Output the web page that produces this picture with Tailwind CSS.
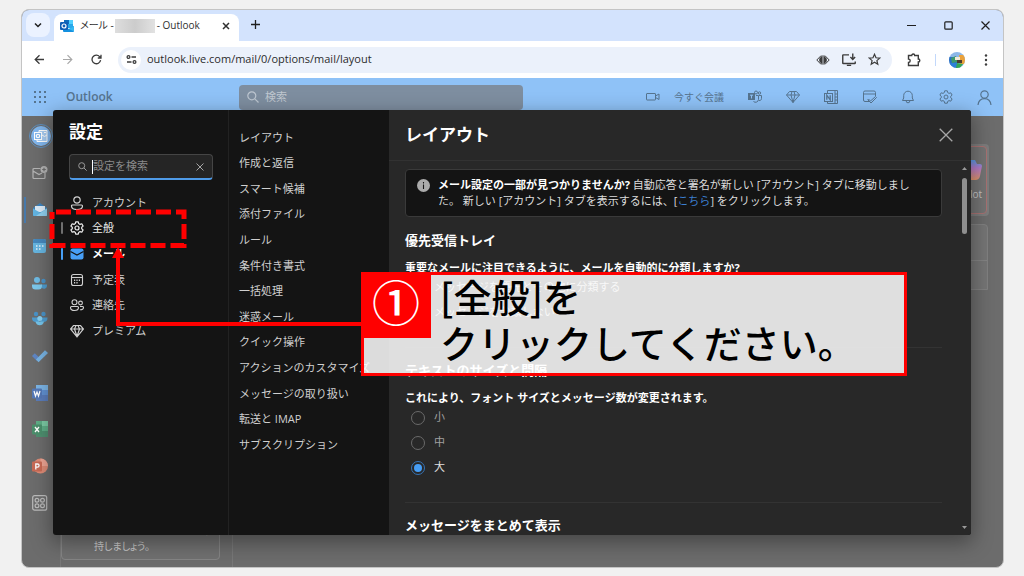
<!DOCTYPE html>
<html lang="ja">
<head>
<meta charset="utf-8">
<meta name="viewport" content="width=device-width, initial-scale=1">
<title>Outlook 設定</title>
<script src="https://cdn.jsdelivr.net/npm/@tailwindcss/browser@4"></script>
</head>
<body class="relative flex min-h-screen flex-col bg-[#f1f1f1] pt-[9px] pr-5 pb-2 pl-[21px] font-['Open_Sans','Noto_Sans_CJK_JP',sans-serif] text-[11px]">

<div class="relative flex flex-1 flex-col overflow-hidden rounded-lg border border-[#c4c4c4] bg-[#6c6c6c]">

  <!-- Tab strip -->
  <div class="flex h-[31px] items-end bg-[#d3e3fd] pl-1 text-[#1f1f1f]">
    <button aria-label="タブを検索" class="mb-1 flex size-6 items-center justify-center rounded-lg bg-[#ebf2ff]">
      <svg class="size-2" viewBox="0 0 8 8" fill="none" stroke="currentColor" stroke-width="1.5"><path d="M1 2.5 4 5.5 7 2.5"/></svg>
    </button>
    <div class="relative ml-1 flex h-[27px] w-[185px] items-center rounded-t-lg bg-white pb-1 pl-1.5 text-[#303030]">
      <svg class="size-[14px]" viewBox="0 0 14 14"><rect x="4" y="1" width="9" height="8" rx="1" fill="#28a8ea"/><path d="M4 1h5v4H4z" fill="#0f6cbd"/><path d="M9 1h3a1 1 0 0 1 1 1v3H9z" fill="#50d0ff"/><path d="M3 7l6 3 5-3v5a1 1 0 0 1-1 1H4a1 1 0 0 1-1-1z" fill="#1490df"/><path d="M9 10l5-3v5.500z" fill="#35b8f1"/><rect y="3" width="8" height="8" rx="1" fill="#0f5fb5"/><circle cx="4" cy="7" r="2" fill="none" stroke="#fff" stroke-width="1.200"/></svg>
      <span class="ml-1.5 flex items-center gap-px text-[10px] whitespace-nowrap"><span class="[font-feature-settings:'palt']">メール -</span><span class="h-3.5 w-10 bg-gradient-to-r from-[#dedede] via-[#cccccc] to-[#e2e2e2]"></span><span class="pl-px">- Outlook</span></span>
      <button aria-label="タブを閉じる" class="mr-[9px] ml-auto"><svg class="size-2" viewBox="0 0 8 8" stroke="currentColor" stroke-width="1.500"><path d="M1 1l6 6M7 1 1 7"/></svg></button>
    </div>
    <button aria-label="新しいタブ" class="mb-3 ml-3"><svg class="size-[9px]" viewBox="0 0 9 9" stroke="currentColor" stroke-width="1.300"><path d="M4.500 0v9M0 4.500h9"/></svg></button>
    <div class="mr-[13px] mb-[11px] ml-auto flex items-center gap-7">
      <button aria-label="最小化"><svg class="size-[9px]" viewBox="0 0 9 9" stroke="currentColor"><path d="M0 4.500h9"/></svg></button>
      <button aria-label="最大化"><svg class="size-[9px]" viewBox="0 0 9 9" fill="none" stroke="currentColor" stroke-width="1.200"><rect x=".8" y=".8" width="7.400" height="7.400" rx="1"/></svg></button>
      <button aria-label="閉じる"><svg class="size-[9px]" viewBox="0 0 9 9" stroke="currentColor" stroke-width="1.200"><path d="M.5.500l8 8M8.500.500l-8 8"/></svg></button>
    </div>
  </div>

  <!-- Address bar -->
  <div class="flex h-[37px] items-center bg-white pr-3 pl-3 text-[#3c3c3c]">
    <button aria-label="戻る"><svg class="size-[11px]" viewBox="0 0 11 11" fill="none" stroke="currentColor" stroke-width="1.300"><path d="M10 5.500H1.500M5.500 1.200 1.200 5.500l4.300 4.300"/></svg></button>
    <button aria-label="進む" class="ml-[17px] text-[#a8a8a8]"><svg class="size-[11px]" viewBox="0 0 11 11" fill="none" stroke="currentColor" stroke-width="1.200"><path d="M1 5.500h8.500M5.500 1.200l4.300 4.300-4.300 4.300"/></svg></button>
    <button aria-label="再読み込み" class="ml-[18px]"><svg class="size-[11px]" viewBox="0 0 11 11" fill="none" stroke="currentColor" stroke-width="1.300"><path d="M9.600 6.200a4.300 4.300 0 1 1-1-3.600L10 4M10 .8V4H6.800"/></svg></button>
    <div class="ml-4 flex h-[26px] flex-1 items-center rounded-full bg-[#ebf1fb] pr-[11px] pl-[3px]">
      <button aria-label="サイト情報" class="flex size-5 items-center justify-center rounded-full bg-white"><svg class="size-[11px]" viewBox="0 0 11 11" fill="none" stroke="currentColor" stroke-width="1.300"><circle cx="2.500" cy="3" r="1.400"/><path d="M5.500 3H10M1 8h4.500"/><circle cx="8.500" cy="8" r="1.400"/></svg></button>
      <input aria-label="アドレス" type="text" value="outlook.live.com/mail/0/options/mail/layout" class="ml-1.5 min-w-0 flex-1 bg-transparent text-[11px] text-[#2c2c2c] outline-none">
      <div class="flex items-center gap-3">
        <button aria-label="レンズ"><svg class="size-[14px]" viewBox="0 0 14 14" fill="none" stroke="currentColor"><path d="M5.200 2.500.8 7l4.400 4.500M8.800 2.500 13.200 7l-4.400 4.500"/><path d="M6.600 2v10L3.200 8.200V5.800zM7.400 2v10l3.400-3.800V5.800z" fill="currentColor" stroke="none"/></svg></button>
        <button aria-label="インストール"><svg class="size-[14px]" viewBox="0 0 13 13" fill="none" stroke="currentColor" stroke-width="1.300"><path d="M6.500 1.700H1.200a.5.500 0 0 0-.5.500v7.100a.5.500 0 0 0 .5.500h10.600a.5.500 0 0 0 .5-.5V7.800M4.500 11.500h4M10 .5v5M7.800 3.800 10 6l2.200-2.200"/></svg></button>
        <button aria-label="ブックマーク"><svg class="size-[13px]" viewBox="0 0 13 13" fill="none" stroke="currentColor" stroke-width="1.200"><path d="M6.500 1.300l1.500 3.500 3.800.3-2.900 2.500.9 3.700-3.300-2-3.300 2 .9-3.700L1.200 5.100 5 4.800z"/></svg></button>
      </div>
    </div>
    <button aria-label="拡張機能" class="ml-[15px]"><svg class="size-[14px]" viewBox="0 0 14 14" fill="none" stroke="currentColor" stroke-width="1.400"><path d="M1.500 2.500h3.200a1.500 1.500 0 0 1 3 0h3.600V6a1.500 1.500 0 0 1 0 3v3.500H1.500V9.500a1.700 1.700 0 0 0 0-3.400z"/></svg></button>
    <span class="ml-[14px] h-3 w-px bg-[#c2d8fb]"></span>
    <button aria-label="プロフィール" class="ml-[13px]"><svg class="size-4" viewBox="0 0 16 16"><clipPath id="av"><circle cx="8" cy="8" r="8"/></clipPath><g clip-path="url(#av)"><path fill="#8db7e8" d="M0 0h16v16H0z"/><path fill="#2a6fc4" d="M0 5h8v8H0z"/><path fill="#3f9a6c" d="M2 6l5-2 2 6-6 1z"/><path fill="#e9a13b" d="M10 3h6v9h-5z"/><path fill="#f2ead8" d="M6 5h5v3H6z"/><path fill="#4a3a30" d="M8 8h5v3H8z"/><path fill="#2c7fd8" d="M0 11h8v5H0z"/><path fill="#33a853" d="M8 11l6 1-3 4H7z"/></g></svg></button>
    <button aria-label="メニュー" class="ml-4"><svg class="h-3 w-[10px]" viewBox="0 0 10 12" fill="currentColor"><circle cx="5" cy="1.500" r="1.200"/><circle cx="5" cy="6" r="1.200"/><circle cx="5" cy="10.500" r="1.200"/></svg></button>
  </div>

  <!-- Outlook header -->
  <header class="flex h-[38px] items-center bg-[#8fc2f7] pr-[11px] pl-3 text-[#56748f]">
    <button aria-label="アプリ起動ツール"><svg class="size-3" viewBox="0 0 12 12" fill="currentColor"><path d="M0 0h2v2H0zM5 0h2v2H5zM10 0h2v2h-2zM0 5h2v2H0zM5 5h2v2H5zM10 5h2v2h-2zM0 10h2v2H0zM5 10h2v2H5zM10 10h2v2h-2z"/></svg></button>
    <span class="ml-5 w-[173px] text-[12px] font-semibold">Outlook</span>
    <label class="flex h-[25px] w-[284px] items-center gap-1.5 rounded-sm bg-[#7e8ea0] pl-2 text-[#bdc6d0]">
      <svg class="size-3" viewBox="0 0 12 12" fill="none" stroke="currentColor" stroke-width="1.200"><circle cx="4.800" cy="4.800" r="4"/><path d="M7.800 7.800 11.500 11.500"/></svg>
      <input aria-label="検索" type="search" placeholder="検索" class="min-w-0 flex-1 bg-transparent text-[11px] outline-none placeholder:text-[#c0c8d0]">
    </label>
    <nav class="ml-auto flex items-center gap-6">
      <button class="flex items-center gap-3.5 text-[10px]"><svg class="size-[14px]" viewBox="0 0 14 14" fill="none" stroke="currentColor"><rect x=".5" y="3.500" width="9" height="6.500" rx=".5"/><path d="M9.500 6 13 4v5.500L9.500 7.500"/></svg>今すぐ会議</button>
      <button aria-label="Teams"><svg class="size-[14px]" viewBox="0 0 14 14" fill="none" stroke="currentColor"><rect x=".5" y="3.500" width="6" height="6" fill="currentColor"/><path d="M2 5.200h3M3.500 5.200V8.500" stroke="#8fc2f7"/><circle cx="8" cy="2.500" r="1.500"/><circle cx="11.500" cy="3" r="1.200"/><path d="M8 5.500h2.500v4a3 3 0 0 1-5 2M11 5.500h2.500v3a2 2 0 0 1-2.500 2"/></svg></button>
      <button aria-label="プレミアム"><svg class="size-[14px]" viewBox="0 0 14 14" fill="none" stroke="currentColor"><path d="M3.500 1.500h7l3 3.500L7 12.500.5 5zM.5 5h13M5 5l2 7.500L9 5M5 5l1-3.500M9 5 8 1.500"/></svg></button>
      <button aria-label="OneNote"><svg class="size-[15px]" viewBox="0 0 15 15" fill="none" stroke="currentColor"><path d="M3.500 3V.5h10v13h-10V12M11 .5v13M11 4h2.500M11 7h2.500M11 10h2.500"/><rect x=".5" y="3.500" width="8" height="8"/><path d="M2.800 9.800V5.200l3.400 4.600V5.200" stroke-width="1.300"/></svg></button>
      <button aria-label="自分の一日"><svg class="size-[14px]" viewBox="0 0 14 14" fill="none" stroke="currentColor"><path d="M6 11.500H2A1.500 1.500 0 0 1 .5 10V2.500A1.500 1.500 0 0 1 2 1h9a1.500 1.500 0 0 1 1.500 1.500V6M.5 4h12"/><path d="M5.500 9l2 2L12.500 6.500l1 1-5.500 5.500-3.200-3.200z"/></svg></button>
      <button aria-label="通知"><svg class="size-[14px]" viewBox="0 0 14 14" fill="none" stroke="currentColor"><path d="M1.500 10.500l1.200-2.500V5.500a4.300 4.300 0 0 1 8.600 0V8l1.200 2.500zM5.200 11a1.800 1.800 0 0 0 3.600 0"/></svg></button>
      <button aria-label="設定"><svg class="size-[14px]" viewBox="0 0 14 14" fill="none" stroke="currentColor" stroke-linejoin="round"><circle cx="7" cy="7" r="2"/><path d="M5.700.8h2.600l.4 1.800 1.300.8 1.800-.6 1.300 2.300L11.700 6.300v1.400l1.400 1.200-1.300 2.300-1.800-.6-1.300.8-.4 1.800H5.700l-.4-1.800-1.300-.8-1.800.6L.9 8.900l1.400-1.200V6.300L.9 5.100l1.300-2.300 1.800.6 1.300-.8z"/></svg></button>
      <button aria-label="アカウント"><svg class="size-[15px]" viewBox="0 0 15 15" fill="none" stroke="currentColor" stroke-width="1.200"><circle cx="7.500" cy="4.500" r="3.700"/><path d="M1 15c.5-4 3-6.300 6.500-6.300S13.500 11 14 15"/></svg></button>
    </nav>
  </header>

  <!-- Dimmed page behind the dialog -->
  <div class="flex flex-1">
    <nav aria-label="アプリ" class="grid h-[405px] w-[38px] shrink-0 grid-rows-11 justify-items-start gap-0 pt-0.5 pl-[10px]">
      <a href="#" aria-label="Outlook" class="-ml-[3px] flex items-center"><span class="flex size-6 items-center justify-center rounded-full border border-[#5d8fc0] p-px"><svg viewBox="0 0 20 20" fill="none" stroke="#fff"><circle cx="10" cy="10" r="10" fill="#82b7ee" stroke="none"/><path d="M8 6.500V4.500h8v11H6v-2" fill="#a9cdf2"/><rect x="3.500" y="6.500" width="7" height="7" fill="#82b7ee"/><circle cx="7" cy="10" r="1.700" stroke-width="1.300"/><path d="M11 9l2.500 1.500L16 9M13 6.500h2"/></svg></span></a>
      <a href="#" aria-label="新規メール" class="flex items-center"><svg class="size-4" viewBox="0 0 16 16" fill="none" stroke="#b5b5b5" stroke-width="1.200"><path d="M8.500 3.500H2A1 1 0 0 0 1 4.500v8a1 1 0 0 0 1 1h10a1 1 0 0 0 1-1V8M1 6l6 3.500L10 8"/><circle cx="12" cy="4.500" r="3.500" fill="#b5b5b5" stroke="none"/><path d="M12 2.700v3.600M10.200 4.500h3.600" stroke="#6c6c6c"/></svg></a>
      <a href="#" aria-label="メール" class="-ml-2 flex items-center gap-[6px]"><span class="h-[26px] w-0.5 bg-[#4779ab]"></span><svg class="size-4" viewBox="0 0 16 16"><path d="M1 6l7-5 7 5v8H1z" fill="#3d82bb"/><path d="M3 4h10v6H3z" fill="#dcebf7"/><path d="M1 6.500l7 4 7-4V13a1 1 0 0 1-1 1H2a1 1 0 0 1-1-1z" fill="#62b4e2"/><path d="M15 6.500 4 14h10a1 1 0 0 0 1-1z" fill="#8fd0ee"/></svg></a>
      <a href="#" aria-label="予定表" class="flex items-center"><svg class="size-4" viewBox="0 0 16 16"><rect x="1" y="1" width="13" height="14" rx="2" fill="#66b5e0"/><path d="M1 5V3a2 2 0 0 1 2-2h9a2 2 0 0 1 2 2v2z" fill="#4688bd"/><path d="M4 8h1.500M7 8h1.500M10 8h1.500M4 11h1.500M7 11h1.500" stroke="#e8f4fb" stroke-width="1.500"/></svg></a>
      <a href="#" aria-label="連絡先" class="flex items-center"><svg class="size-4" viewBox="0 0 16 16"><circle cx="5" cy="5" r="3" fill="#6fbce6"/><circle cx="11.500" cy="6" r="2.200" fill="#4a93c8"/><path d="M9 9.500h6v1a3 3 0 0 1-5 2.500z" fill="#4f9dd0"/><path d="M0 9.500h10V11a3.500 3.500 0 0 1-3.500 3.500h-3A3.500 3.500 0 0 1 0 11z" fill="#7cc8ec"/></svg></a>
      <a href="#" aria-label="グループ" class="flex items-center"><svg class="size-4" viewBox="0 0 16 16"><circle cx="4" cy="3" r="2.200" fill="#4a93c8"/><circle cx="11.500" cy="3" r="2.200" fill="#4a93c8"/><path d="M0 6.500h7V11H4A4 4 0 0 1 0 7zM8.500 6.500h7V7a4 4 0 0 1-4 4h-3z" fill="#4f9dd0"/><circle cx="7.800" cy="7.500" r="2.500" fill="#8ad0f0"/><path d="M3.500 10.500h8.500a4.300 4.300 0 0 1-8.500 0z" fill="#75c4ea"/></svg></a>
      <a href="#" aria-label="To Do" class="flex items-center"><svg class="size-4" viewBox="0 0 16 16"><path d="M0 8l2.800-2.800 4.700 4.500-2.700 3z" fill="#5f86c4"/><path d="M4 11.500 13 2.300 16 5 6.500 14.200z" fill="#78b4e4"/></svg></a>
      <a href="#" aria-label="Word" class="flex items-center"><svg class="size-4" viewBox="0 0 16 16"><path d="M4 0h12v16H4z" fill="#7cb5e6"/><path d="M4 5h12v5H4z" fill="#6191d2"/><path d="M4 10h12v6H4z" fill="#5a7cba"/><rect y="3.500" width="10" height="10" rx="1" fill="#5478b6"/><path d="M2 6l1.500 5L5 7l1.500 4L8 6" fill="none" stroke="#fff" stroke-width="1.200"/></svg></a>
      <a href="#" aria-label="Excel" class="flex items-center"><svg class="size-4" viewBox="0 0 16 16"><path d="M4 0h12v16H4z" fill="#5fae87"/><path d="M10 0h6v5h-6z" fill="#7ccaa4"/><path d="M4 10h12v6H4z" fill="#4f8f70"/><rect y="3.500" width="10" height="10" rx="1" fill="#4b8f6c"/><path d="M3 6l4 5M7 6l-4 5" stroke="#fff" stroke-width="1.300"/></svg></a>
      <a href="#" aria-label="PowerPoint" class="flex items-center"><svg class="size-4" viewBox="0 0 16 16"><circle cx="8.500" cy="8" r="7.500" fill="#dd8b76"/><path d="M8.500.5a7.500 7.500 0 0 1 7.500 7.500H8.500z" fill="#eca493"/><rect y="3.500" width="10" height="10" rx="1" fill="#c86a55"/><path d="M3.800 11.500V6h1.700a1.600 1.600 0 0 1 0 3.200H3.800" fill="none" stroke="#fff" stroke-width="1.300"/></svg></a>
      <a href="#" aria-label="その他のアプリ" class="flex items-center"><svg class="size-4" viewBox="0 0 16 16" fill="none" stroke="#bcbcbc" stroke-width="1.200"><rect x=".7" y=".7" width="14" height="14.500" rx="2"/><circle cx="5" cy="5.200" r="1.900"/><circle cx="10.500" cy="5.200" r="1.900"/><circle cx="5" cy="10.800" r="1.900"/><circle cx="10.500" cy="10.800" r="1.900"/></svg></a>
    </nav>
    <div class="flex w-[173px] shrink-0 flex-col justify-end border-x border-[#787878] pr-3 pb-[7px]">
      <div class="rounded-b-sm border border-[#858585] bg-[#707070] pt-2 pr-3 pb-[5px] pl-8 text-[10px] leading-4 whitespace-nowrap text-[#cbcbcb] [font-feature-settings:'palt']">り、外出先でもつながりを維<br>持しましょう。</div>
    </div>
    <div class="flex flex-1 flex-col items-end pt-7 pr-[14px] text-[#c4c4c4]">
      <div class="rounded-sm bg-[#7c7c7c] p-0.5"><div class="flex h-[68px] w-12 flex-col items-end justify-center gap-2 rounded-sm border border-[#a87272] bg-[#747474] pr-1"><svg class="h-5 w-4" viewBox="0 0 16 20"><defs><linearGradient id="cp" x1="0" y1="0" x2="0" y2="1"><stop offset="0" stop-color="#5a9be8"/><stop offset=".4" stop-color="#b47bc8"/><stop offset="1" stop-color="#e0946c"/></linearGradient></defs><path d="M2 0h7l2 4h3a2 2 0 0 1 2 2l-2 10a5 5 0 0 1-5 4H2z" fill="url(#cp)"/></svg><span class="text-[10px] leading-3">Copilot</span></div></div>
      <div class="mt-2 mr-px h-[66px] w-14 rounded-t-sm border border-[#808080] bg-[#757575]"><div class="h-9 border-b border-[#838383]"></div></div>
    </div>
  </div>

  <!-- Settings dialog -->
  <section role="dialog" aria-label="設定" class="absolute top-[100px] right-8 bottom-8 left-[31px] flex overflow-hidden rounded-[3px] bg-[#141414] text-[#d0d0d0] shadow-[0_6px_20px_2px_rgba(0,0,0,0.35)]">
    <div class="w-[176px] shrink-0 border-r border-[#222222] pt-2.5 pr-[15px] pl-4">
      <h1 class="text-[17px] leading-6 font-bold text-white">設定</h1>
      <div class="relative mt-[10px] flex h-[26px] items-center rounded-sm border border-b-2 border-[#454545] border-b-[#4f9be8] bg-[#252525] px-2">
        <svg class="size-[9px] shrink-0" viewBox="0 0 9 9" fill="none" stroke="#9a9a9a"><circle cx="3.700" cy="3.700" r="3"/><path d="M6 6l2.700 2.700"/></svg>
        <span class="ml-[5px] h-3.5 w-px shrink-0 bg-white"></span>
        <input aria-label="設定を検索" type="text" placeholder="設定を検索" class="min-w-0 flex-1 bg-transparent text-[11px] outline-none placeholder:text-[#8a8a8a]">
        <button aria-label="クリア"><svg class="size-2" viewBox="0 0 8 8" stroke="#a5a5a5"><path d="M.5.500l7 7M7.500.500l-7 7"/></svg></button>
      </div>
      <nav class="mt-[10px] -ml-2 grid h-[154px] grid-rows-6">
        <a href="#" class="flex items-center gap-2 pl-[9px]"><svg class="size-[14px]" viewBox="0 0 14 14" fill="none" stroke="currentColor" stroke-width="1.200"><circle cx="7" cy="4" r="3.200"/><path d="M2.500 9h9a1 1 0 0 1 1 1c0 2.300-2.200 3.500-5.500 3.500S1.500 12.300 1.500 10a1 1 0 0 1 1-1z"/></svg>アカウント</a>
        <a href="#" class="flex items-center text-[#ececec]"><span class="h-3 w-0.5 rounded-full bg-[#6f6f6f]"></span><svg class="mr-2 ml-[7px] size-[14px]" viewBox="0 0 14 14" fill="none" stroke="currentColor" stroke-width="1.200" stroke-linejoin="round"><circle cx="7" cy="7" r="2"/><path d="M5.700.8h2.600l.4 1.800 1.300.8 1.800-.6 1.300 2.300L11.700 6.300v1.400l1.400 1.200-1.300 2.300-1.800-.6-1.300.8-.4 1.800H5.700l-.4-1.800-1.300-.8-1.800.6L.9 8.900l1.400-1.200V6.300L.9 5.100l1.300-2.300 1.800.6 1.300-.8z"/></svg>全般</a>
        <a href="#" aria-current="page" class="flex items-center font-bold text-white"><span class="h-3 w-0.5 rounded-full bg-[#479ef5]"></span><svg class="mr-2 ml-[7px] size-[14px]" viewBox="0 0 14 14"><rect x=".5" y="1.500" width="13" height="11" rx="2" fill="#479ef5"/><path d="M.5 4.500 7 8l6.500-3.500" fill="none" stroke="#141414" stroke-width="1.200"/></svg>メール</a>
        <a href="#" class="flex items-center gap-2 pl-[9px]"><svg class="size-[14px]" viewBox="0 0 14 14" fill="none" stroke="currentColor" stroke-width="1.100"><rect x="1.500" y="1.500" width="11" height="11" rx="2"/><path d="M1.500 4.500h11"/><path d="M4 7.200h1.200M6.400 7.200h1.200M8.800 7.200H10M4 9.800h1.200M6.400 9.800h1.200" stroke-width="1.400"/></svg>予定表</a>
        <a href="#" class="flex items-center gap-2 pl-[9px]"><svg class="size-[14px]" viewBox="0 0 14 14" fill="none" stroke="currentColor" stroke-width="1.100"><circle cx="4.500" cy="4.300" r="2.500"/><circle cx="10.500" cy="5" r="1.900"/><path d="M1.500 8.500h6a1 1 0 0 1 1 1c0 2-1.500 3-4 3s-4-1-4-3a1 1 0 0 1 1-1zM10 8.500h2.500a1 1 0 0 1 1 1c0 1.500-1.500 2.500-3.500 2.200"/></svg>連絡先</a>
        <a href="#" class="flex items-center gap-2 pl-[9px]"><svg class="size-[14px]" viewBox="0 0 14 14" fill="none" stroke="currentColor" stroke-width="1.200"><path d="M3.500 1.500h7l3 3.500L7 12.800.5 5zM.5 5h13M4.500 5 7 12.500 9.500 5M4.500 5 6 1.500M9.500 5 8 1.500"/></svg>プレミアム</a>
      </nav>
    </div>

    <nav aria-label="メール設定" class="w-[160px] shrink-0 pt-[15px] pl-[10px]">
      <div class="grid h-[333px] grid-rows-13 items-center whitespace-nowrap">
        <a href="#">レイアウト</a><a href="#">作成と返信</a><a href="#">スマート候補</a><a href="#">添付ファイル</a><a href="#">ルール</a><a href="#">条件付き書式</a><a href="#">一括処理</a><a href="#">迷惑メール</a><a href="#">クイック操作</a><a href="#">アクションのカスタマイズ</a><a href="#">メッセージの取り扱い</a><a href="#">転送と IMAP</a><a href="#">サブスクリプション</a>
      </div>
    </nav>

    <div class="flex min-w-0 flex-1 flex-col bg-[#282828]">
      <div class="flex h-[51px] shrink-0 items-center justify-between border-b border-[#323232] pr-[18px] pl-4">
        <h2 class="text-[17px] leading-6 font-bold text-white">レイアウト</h2>
        <button aria-label="閉じる"><svg class="size-[14px]" viewBox="0 0 14 14" stroke="#a8a8a8" stroke-width="1.300"><path d="M.7.700l12.600 12.600M13.300.700.7 13.300"/></svg></button>
      </div>
      <div class="flex min-h-0 flex-1">
        <div class="min-w-0 flex-1 overflow-hidden pt-2 pr-5 pl-4">
          <div class="flex gap-2 rounded-sm border border-[#3a3a3a] bg-[#141414] py-[7px] pl-[11px] text-[#dcdcdc]">
            <svg class="mt-0.5 size-[13px] shrink-0" viewBox="0 0 13 13"><circle cx="6.500" cy="6.500" r="6.500" fill="#ababab"/><path d="M6.500 5.500V10M6.500 3v1.400" stroke="#141414" stroke-width="1.100"/></svg>
            <p class="leading-4 whitespace-nowrap"><b class="text-white">メール設定の一部が見つかりませんか?</b> 自動応答と署名が新しい [アカウント] タブに移動しまし<br>た。 新しい [アカウント] タブを表示するには、[<a href="#" class="text-[#3b7fd0]">こちら</a>] をクリックします。</p>
          </div>
          <h3 class="mt-[13px] text-[13px] leading-5 font-bold text-white">優先受信トレイ</h3>
          <fieldset class="mt-2.5">
            <legend class="-mb-px text-[11px] leading-4 font-bold text-white">重要なメールに注目できるように、メールを自動的に分類しますか?</legend>
            <label class="flex h-[25px] items-center gap-[9px] pl-1.5"><input type="radio" name="focus" class="size-[14px] appearance-none rounded-full border border-[#6a6a6a]">メッセージを優先とその他に分類する</label>
            <label class="flex h-[25px] items-center gap-[9px] pl-1.5"><input type="radio" name="focus" class="size-[14px] appearance-none rounded-full border border-[#6a6a6a]">メッセージを分類しない</label>
          </fieldset>
          <hr class="mt-[22px] border-[#333333]">
          <h3 class="mt-3 text-[13px] leading-5 font-bold text-white">テキストのサイズと間隔</h3>
          <fieldset class="mt-2.5 text-[#a0a0a0]">
            <legend class="-mb-px text-[11px] leading-4 font-bold text-white">これにより、フォント サイズとメッセージ数が変更されます。</legend>
            <label class="flex h-[25px] items-center gap-[9px] pl-1.5"><input type="radio" name="size" class="size-[14px] appearance-none rounded-full border border-[#6a6a6a]">小</label>
            <label class="flex h-[25px] items-center gap-[9px] pl-1.5"><input type="radio" name="size" class="size-[14px] appearance-none rounded-full border border-[#6a6a6a]">中</label>
            <label class="flex h-[25px] items-center gap-[9px] pl-1.5 text-[#e0e0e0]"><input type="radio" name="size" checked class="size-[14px] appearance-none rounded-full border border-[#3573b5] bg-[#479ef5] bg-clip-content p-0.5">大</label>
          </fieldset>
          <hr class="mt-[22px] border-[#333333]">
          <h3 class="mt-3 text-[13px] leading-5 font-bold text-white">メッセージをまとめて表示</h3>
        </div>
        <div aria-hidden="true" class="flex w-[9px] shrink-0 flex-col items-start pt-1.5 pb-1.5">
          <svg class="h-[3px] w-[5px]" viewBox="0 0 5 3"><path d="M0 3 2.500 0 5 3z" fill="#999"/></svg>
          <div class="mt-2 h-14 w-[5px] rounded-full bg-[#8f8f8f]"></div>
          <svg class="mt-auto h-[3px] w-[5px]" viewBox="0 0 5 3"><path d="M0 0h5L2.500 3z" fill="#999"/></svg>
        </div>
      </div>
    </div>
  </section>
</div>

<!-- Annotation: highlight box, arrow and callout -->
<svg class="pointer-events-none absolute top-[200px] left-10 h-[130px] w-[325px]" viewBox="0 0 325 130" fill="none" stroke="#ff0000">
  <path d="M12 12H144V45.500H12z" stroke-width="5" stroke-dasharray="15 5" stroke-dashoffset="-4"/>
  <path d="M78 54V124H323" stroke-width="4"/>
  <path d="M78 47l-6 11h12z" fill="#ff0000" stroke="none"/>
</svg>
<div class="absolute top-[272px] left-[361px] flex h-[104px] w-[546px] border-[3px] border-[#ff0000] bg-white/85 text-black">
  <div class="-mt-[3px] -ml-[3px] flex h-[66px] w-[70px] shrink-0 items-center justify-center bg-[#ff0000] pb-1 text-[48px] leading-none font-medium text-white">①</div>
  <p class="-mt-0.5 ml-[9px] text-[38px] leading-[46px] font-medium whitespace-nowrap font-['Noto_Sans_CJK_JP',sans-serif]">[全般]を<br>クリックしてください。</p>
</div>
</body>
</html>
